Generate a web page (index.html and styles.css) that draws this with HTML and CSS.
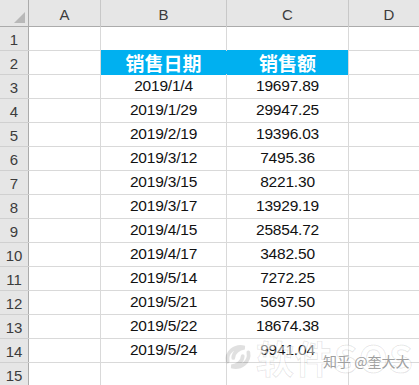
FILE: index.html
```html
<!DOCTYPE html>
<html lang="zh">
<head>
<meta charset="utf-8">
<link rel="stylesheet" href="styles.css">
</head>
<body>
<div class="sheet">
  <div class="grid">
    <div class="corner"><span class="tri"></span></div>
    <div class="colhead">A</div>
    <div class="colhead">B</div>
    <div class="colhead">C</div>
    <div class="colhead last">D</div>

    <div class="rowhead">1</div><div class="cell"></div><div class="cell"></div><div class="cell"></div><div class="cell"></div>
    <div class="rowhead">2</div><div class="cell"></div><div class="cell title join">销售日期</div><div class="cell title">销售额</div><div class="cell"></div>
    <div class="rowhead">3</div><div class="cell"></div><div class="cell">2019/1/4</div><div class="cell">19697.89</div><div class="cell"></div>
    <div class="rowhead">4</div><div class="cell"></div><div class="cell">2019/1/29</div><div class="cell">29947.25</div><div class="cell"></div>
    <div class="rowhead">5</div><div class="cell"></div><div class="cell">2019/2/19</div><div class="cell">19396.03</div><div class="cell"></div>
    <div class="rowhead">6</div><div class="cell"></div><div class="cell">2019/3/12</div><div class="cell">7495.36</div><div class="cell"></div>
    <div class="rowhead">7</div><div class="cell"></div><div class="cell">2019/3/15</div><div class="cell">8221.30</div><div class="cell"></div>
    <div class="rowhead">8</div><div class="cell"></div><div class="cell">2019/3/17</div><div class="cell">13929.19</div><div class="cell"></div>
    <div class="rowhead">9</div><div class="cell"></div><div class="cell">2019/4/15</div><div class="cell">25854.72</div><div class="cell"></div>
    <div class="rowhead">10</div><div class="cell"></div><div class="cell">2019/4/17</div><div class="cell">3482.50</div><div class="cell"></div>
    <div class="rowhead">11</div><div class="cell"></div><div class="cell">2019/5/14</div><div class="cell">7272.25</div><div class="cell"></div>
    <div class="rowhead">12</div><div class="cell"></div><div class="cell">2019/5/21</div><div class="cell">5697.50</div><div class="cell"></div>
    <div class="rowhead">13</div><div class="cell"></div><div class="cell">2019/5/22</div><div class="cell">18674.38</div><div class="cell"></div>
    <div class="rowhead">14</div><div class="cell"></div><div class="cell">2019/5/24</div><div class="cell">9941.04</div><div class="cell"></div>
    <div class="rowhead">15</div><div class="cell"></div><div class="cell"></div><div class="cell"></div><div class="cell"></div>
  </div>

  <div class="watermark">
    <svg class="swirl" width="32" height="32" viewBox="0 0 34 34">
      <path d="M6 22 C4 12 14 4 24 7 C18 8 12 12 12 18" fill="none" stroke="rgba(0,0,0,0.12)" stroke-width="4" stroke-linecap="round"/>
      <path d="M28 12 C30 22 20 30 10 27 C16 26 22 22 22 16" fill="none" stroke="rgba(0,0,0,0.12)" stroke-width="4" stroke-linecap="round"/>
    </svg>
    <span class="brand">软件SOS</span>
  </div>
  <div class="credit">知乎 @奎大大</div>
</div>
</body>
</html>
```
FILE: styles.css
```css
* { box-sizing: border-box; }
html, body {
  margin: 0;
  padding: 0;
  background: #ffffff;
  overflow: hidden;
}
.sheet {
  position: relative;
  width: 419px;
  height: 385px;
  overflow: hidden;
  font-family: "Liberation Sans", Arial, "Noto Sans CJK SC", sans-serif;
}
.grid {
  display: grid;
  grid-template-columns: 28px 71px 125px 121px 80px;
  grid-template-rows: 26px repeat(15, 23px);
  gap: 1px;
  background: #d9d9d9;
  width: 430px;
}
.corner {
  background: #e6e6e6;
  position: relative;
  border-right: 1px solid #ababab;
  margin-right: -1px;
  border-bottom: 1px solid #ababab;
  margin-bottom: -1px;
}
.tri {
  position: absolute;
  left: 14px;
  top: 12px;
  width: 0;
  height: 0;
  border-left: 11px solid transparent;
  border-bottom: 11px solid #b8b8b8;
}
.colhead {
  background: #e6e6e6;
  border-bottom: 1px solid #ababab;
  margin-bottom: -1px;
  color: #3c3c3c;
  font-size: 15px;
  display: flex;
  align-items: flex-end;
  justify-content: center;
  padding-bottom: 3px;
  box-shadow: 1px 0 0 #c8c8c8;
}
.rowhead {
  background: #e6e6e6;
  border-right: 1px solid #ababab;
  margin-right: -1px;
  color: #3c3c3c;
  font-size: 15px;
  display: flex;
  align-items: flex-end;
  justify-content: center;
  padding-bottom: 2px;
  box-shadow: 0 1px 0 #d0d0d0;
}
.cell {
  background: #ffffff;
  color: #111111;
  font-size: 15.5px;
  display: flex;
  align-items: flex-end;
  justify-content: center;
  padding-bottom: 3px;
  letter-spacing: -0.2px;
}
.title {
  background: #00b0f0;
  color: #ffffff;
  font-family: "Noto Sans CJK SC", sans-serif;
  font-weight: 700;
  font-size: 19px;
  padding-bottom: 0;
  align-items: center;
  letter-spacing: 0;
  line-height: 1;
  box-shadow: 0 -1px 0 #00b0f0, 0 1px 0 #00b0f0;
}
.join {
  box-shadow: 1px 0 0 #00b0f0, 0 -1px 0 #00b0f0, 0 1px 0 #00b0f0;
}
.watermark {
  position: absolute;
  left: 222px;
  top: 338px;
  display: flex;
  align-items: center;
  gap: 2px;
  white-space: nowrap;
  pointer-events: none;
}
.brand {
  font-family: "Noto Sans CJK SC", sans-serif;
  font-weight: 700;
  font-size: 38px;
  line-height: 1;
  color: rgba(255, 255, 255, 0.5);
  -webkit-text-stroke: 1px rgba(0, 0, 0, 0.1);
  letter-spacing: 1px;
}
.credit {
  position: absolute;
  left: 323px;
  top: 354px;
  font-family: "Noto Sans CJK SC", sans-serif;
  font-size: 14px;
  line-height: 1;
  color: #a0a0a0;
  text-shadow: 0 0 2px #ffffff, 0 0 2px #ffffff;
  white-space: nowrap;
}
```
